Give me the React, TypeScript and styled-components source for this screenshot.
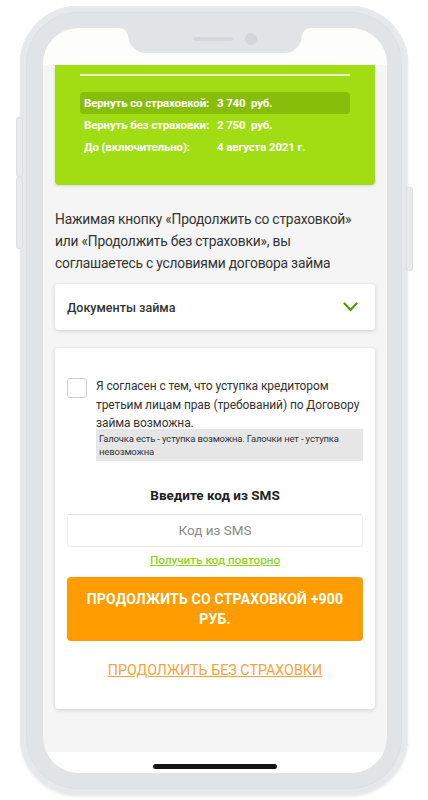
import React from "react";
import styled, { createGlobalStyle } from "styled-components";

const GlobalStyle = createGlobalStyle`
  html, body { margin: 0; padding: 0; background: #ffffff; }
  body { font-family: Roboto, "Noto Sans", "Liberation Sans", sans-serif; }
  * { box-sizing: border-box; }
`;

const Page = styled.div`
  width: 428px;
  height: 800px;
  padding: 6px 20px 5px 20px;
  display: flex;
`;

const Phone = styled.div`
  position: relative;
  width: 388px;
  height: 789px;
  border-radius: 58px;
  background: #e1e4e7;
  padding: 22px 21px 22px 23px;
  box-shadow: inset 0 0 0 1px #e9ebed, inset 0 0 0 6px #e6e8eb, inset 0 0 0 7px #dcdfe2,
    0 2px 3px rgba(0, 0, 0, 0.08);
`;

const SideButton = styled.div<{ $side: "left" | "right"; $top: number; $h: number }>`
  position: absolute;
  ${(p) => (p.$side === "left" ? "left: -3px;" : "right: -4px;")}
  top: ${(p) => p.$top}px;
  width: 5px;
  height: ${(p) => p.$h}px;
  border-radius: 2px;
  background: #e8eaed;
  box-shadow: 0 0 0 1px #dcdfe2;
  z-index: 0;
`;

const Screen = styled.div`
  position: relative;
  z-index: 1;
  height: 100%;
  border-radius: 36px;
  overflow: hidden;
  background: #f5f5f5;
  display: flex;
  flex-direction: column;
`;

const StatusBar = styled.div`
  flex-shrink: 0;
  height: 37px;
  background: #fdfdfb;
  position: relative;
  z-index: 2;
`;

const Notch = styled.div`
  position: absolute;
  left: 50%;
  top: 0;
  transform: translateX(-50%);
  width: 174px;
  height: 25px;
  background: #e1e4e7;
  border-radius: 0 0 18px 18px;
  display: flex;
  align-items: center;
  justify-content: center;
  gap: 12px;
  padding-bottom: 3px;
  padding-left: 20px;
  &::before,
  &::after {
    content: "";
    position: absolute;
    top: 0;
    width: 8px;
    height: 8px;
  }
  &::before {
    left: -8px;
    background: radial-gradient(circle at 0 100%, transparent 7.5px, #e1e4e7 8px);
  }
  &::after {
    right: -8px;
    background: radial-gradient(circle at 100% 100%, transparent 7.5px, #e1e4e7 8px);
  }
`;

const Speaker = styled.div`
  width: 40px;
  height: 4px;
  border-radius: 2px;
  background: #d3d6da;
`;

const Camera = styled.div`
  width: 12px;
  height: 12px;
  border-radius: 50%;
  background: #d2d5d9;
`;

const Content = styled.div`
  flex: 1;
  overflow: hidden;
  padding: 0 12px;
  display: flex;
  flex-direction: column;
`;

const GreenCard = styled.div`
  background: #a0dd13;
  border-radius: 0 0 4px 4px;
  padding: 9px 25px 27px 25px;
  box-shadow: 0 1px 3px rgba(0, 0, 0, 0.12);
`;

const Divider = styled.div`
  height: 2px;
  background: rgba(255, 255, 255, 0.75);
  margin-bottom: 16px;
`;

const InfoRow = styled.div<{ $highlight?: boolean }>`
  display: grid;
  grid-template-columns: 133px 1fr;
  align-items: center;
  height: 22px;
  padding: 0 4px;
  border-radius: 4px;
  background: ${(p) => (p.$highlight ? "#87be09" : "transparent")};
  color: #ffffff;
  font-size: 11.5px;
  letter-spacing: -0.15px;
  font-weight: 700;
  white-space: pre;
`;

const Notice = styled.p`
  margin: 23px 0 0 0;
  padding-right: 6px;
  font-size: 13.8px;
  letter-spacing: -0.2px;
  line-height: 22px;
  color: #333333;
`;

const Accordion = styled.div`
  margin-top: 10px;
  height: 46px;
  background: #ffffff;
  border-radius: 4px;
  box-shadow: 0 1px 4px rgba(0, 0, 0, 0.16);
  display: flex;
  align-items: center;
  justify-content: space-between;
  padding: 0 17px 0 12px;
  font-size: 12.5px;
  font-weight: 500;
  color: #333333;
`;

const MainCard = styled.div`
  margin-top: 18px;
  background: #ffffff;
  border-radius: 4px;
  box-shadow: 0 1px 4px rgba(0, 0, 0, 0.16);
  padding: 29px 12px 29px 12px;
  display: flex;
  flex-direction: column;
  align-items: stretch;
`;

const CheckRow = styled.div`
  display: flex;
  align-items: flex-start;
  gap: 9px;
`;

const CheckBox = styled.div`
  flex-shrink: 0;
  width: 20px;
  height: 20px;
  margin-top: 1px;
  border: 1px solid #cfcfcf;
  border-radius: 3px;
  background: #ffffff;
`;

const CheckText = styled.div`
  flex: 1;
  font-size: 12px;
  letter-spacing: -0.1px;
  line-height: 18.5px;
  color: #333333;
`;

const Hint = styled.div`
  margin-top: -4px;
  background: #e6e6e6;
  padding: 3px 3px 3px 3px;
  font-size: 9.5px;
  letter-spacing: -0.15px;
  line-height: 13px;
  color: #333333;
`;

const SmsTitle = styled.div`
  margin-top: 24px;
  text-align: center;
  font-size: 13.5px;
  line-height: 20px;
  font-weight: 700;
  color: #222222;
`;

const SmsInput = styled.input`
  margin-top: 9px;
  height: 33px;
  width: 100%;
  border: 1px solid #f0f0f0;
  border-top-color: #e2e2e2;
  border-radius: 3px;
  background: #ffffff;
  text-align: center;
  font-family: Roboto, "Noto Sans", sans-serif;
  font-size: 13.5px;
  color: #333;
  outline: none;
  &::placeholder { color: #8a8a8a; }
`;

const Resend = styled.a`
  margin-top: 5px;
  align-self: center;
  font-size: 11.7px;
  line-height: 16px;
  font-weight: 500;
  color: #8fd41c;
  text-decoration: underline;
`;

const PrimaryButton = styled.button`
  margin-top: 9px;
  height: 64px;
  width: 100%;
  border: none;
  border-radius: 4px;
  background: #ff9d00;
  color: #ffffff;
  font-family: Roboto, "Noto Sans", sans-serif;
  font-size: 14px;
  line-height: 20px;
  font-weight: 700;
  text-transform: uppercase;
  letter-spacing: 0.2px;
  padding: 0 14px;
`;

const SecondaryLink = styled.a`
  margin-top: 19px;
  align-self: center;
  font-size: 14.3px;
  line-height: 20px;
  color: #f9a33a;
  text-decoration: underline;
  text-transform: uppercase;
`;

const BottomBar = styled.div`
  flex-shrink: 0;
  height: 21px;
  background: #ffffff;
  display: flex;
  align-items: flex-end;
  justify-content: center;
  padding-bottom: 4px;
`;

const HomeIndicator = styled.div`
  width: 124px;
  height: 5px;
  border-radius: 3px;
  background: #141414;
`;

const Chevron = () => (
  <svg width="15" height="10" viewBox="0 0 15 10" fill="none">
    <polyline points="1.5,1.5 7.5,8 13.5,1.5" stroke="#4f9a0c" strokeWidth="2.2" strokeLinecap="round" strokeLinejoin="round" />
  </svg>
);

export default function App() {
  return (
    <>
      <GlobalStyle />
      <Page>
        <Phone>
          <SideButton $side="left" $top={112} $h={58} />
          <SideButton $side="left" $top={172} $h={70} />
          <SideButton $side="right" $top={182} $h={82} />
          <Screen>
            <StatusBar>
              <Notch>
                <Speaker />
                <Camera />
              </Notch>
            </StatusBar>
            <Content>
              <GreenCard>
                <Divider />
                <InfoRow $highlight>
                  <span>Вернуть со страховкой:</span>
                  <span>3 740  руб.</span>
                </InfoRow>
                <InfoRow>
                  <span>Вернуть без страховки:</span>
                  <span>2 750  руб.</span>
                </InfoRow>
                <InfoRow>
                  <span>До (включительно):</span>
                  <span>4 августа 2021 г.</span>
                </InfoRow>
              </GreenCard>
              <Notice>
                Нажимая кнопку «Продолжить со страховкой» или «Продолжить без страховки», вы
                соглашаетесь с условиями договора займа
              </Notice>
              <Accordion>
                <span>Документы займа</span>
                <Chevron />
              </Accordion>
              <MainCard>
                <CheckRow>
                  <CheckBox />
                  <CheckText>
                    Я согласен с тем, что уступка кредитором третьим лицам прав (требований) по
                    Договору займа возможна.
                    <Hint>Галочка есть - уступка возможна. Галочки нет - уступка невозможна</Hint>
                  </CheckText>
                </CheckRow>
                <SmsTitle>Введите код из SMS</SmsTitle>
                <SmsInput placeholder="Код из SMS" />
                <Resend>Получить код повторно</Resend>
                <PrimaryButton>Продолжить со страховкой +900 руб.</PrimaryButton>
                <SecondaryLink>Продолжить без страховки</SecondaryLink>
              </MainCard>
            </Content>
            <BottomBar>
              <HomeIndicator />
            </BottomBar>
          </Screen>
        </Phone>
      </Page>
    </>
  );
}
